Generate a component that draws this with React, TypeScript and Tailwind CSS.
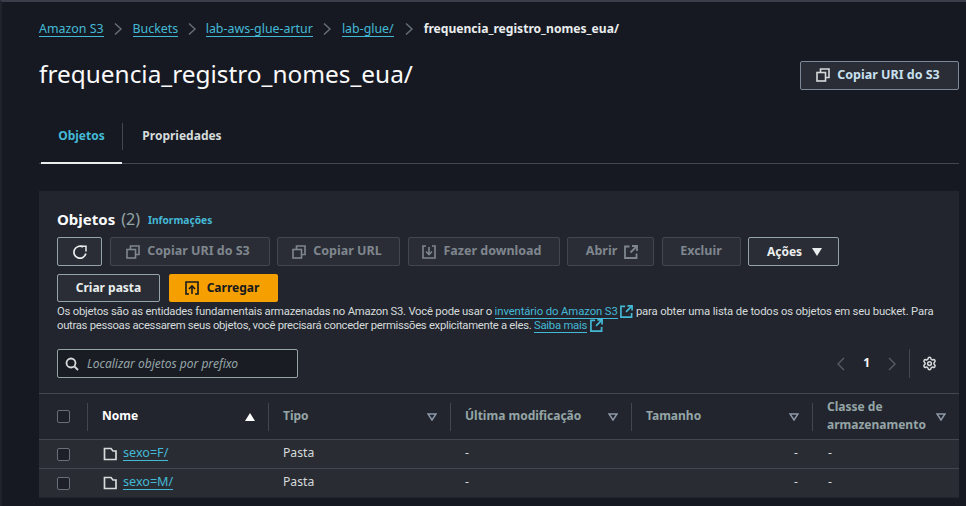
import React from "react";
import { Settings } from "lucide-react";

const ff = "font-['Noto_Sans','Open_Sans',sans-serif]";

function CopyIcon({ c = "currentColor" }: { c?: string }) {
  return (
    <svg width="14" height="14" viewBox="0 0 14 14" fill="none" stroke={c} strokeWidth="1.6" className="shrink-0">
      <rect x="1" y="4.5" width="8.5" height="8.5" />
      <path d="M4.5 4.5V1H13V9.5H9.5" />
    </svg>
  );
}

function ExtIcon({ c = "currentColor", s = 14 }: { c?: string; s?: number }) {
  return (
    <svg width={s} height={s} viewBox="0 0 14 14" fill="none" stroke={c} strokeWidth="1.8" className="inline-block shrink-0 align-[-3px]">
      <path d="M5.5 1.5H1V13H12.5V8.5" />
      <path d="M8 1H13V6" />
      <path d="M13 1L6.5 7.5" />
    </svg>
  );
}

function SortIcon() {
  return (
    <svg width="10" height="8" viewBox="0 0 10 8" fill="none" stroke="#8d99a8" strokeWidth="1.5" className="shrink-0">
      <path d="M1 1H9L5 7Z" />
    </svg>
  );
}

function Checkbox() {
  return <div className="h-[13px] w-[13px] rounded-[2px] border border-[#687078] bg-[#1e2028]" />;
}

function FolderIcon() {
  return (
    <svg width="14" height="14" viewBox="0 0 14 14" fill="none" stroke="#d5dbdb" strokeWidth="1.7" className="shrink-0">
      <path d="M1.5 12.5V1.5H8L10 4H13V12.5Z" />
    </svg>
  );
}

function Crumb({ children }: { children: React.ReactNode }) {
  return <a className="border-b border-[#44b9d6] leading-[15px] text-[#44b9d6]">{children}</a>;
}

function Chevron({ m }: { m: string }) {
  return (
    <svg width="10" height="14" viewBox="0 0 10 14" fill="none" stroke="#687078" strokeWidth="1.4" className={`${m} shrink-0`}>
      <path d="M2 1.5L8 7L2 12.5" />
    </svg>
  );
}

function DisabledBtn({ w, children }: { w: string; children: React.ReactNode }) {
  return (
    <div className={`${w} flex h-[29px] items-center justify-center gap-[7px] rounded-[2px] border border-[#414750] bg-[#2a2d35] pr-[3px] text-[12.5px] font-bold text-[#7f868e]`}>
      {children}
    </div>
  );
}

function Th({ label, active, sep = true }: { label: React.ReactNode; active?: boolean; sep?: boolean }) {
  return (
    <div className="relative flex h-full items-center justify-between pl-[15px] pr-[13px]">
      {sep && <div className="absolute left-0 top-[9px] h-[28px] w-px bg-[#414750]" />}
      <span className={`mb-[2px] text-[12px] font-bold leading-[18px] ${active ? "text-white" : "text-[#95a5a6]"}`}>{label}</span>
      {active ? (
        <svg width="10" height="8" viewBox="0 0 10 8" className="shrink-0"><path d="M0 8H10L5 0Z" fill="#fff" /></svg>
      ) : (
        <SortIcon />
      )}
    </div>
  );
}

function Row({ name }: { name: string }) {
  const cols = "grid grid-cols-[48px_181px_182px_181px_181px_1fr]";
  return (
    <div className={`${cols} h-[29px] items-center border-t border-[#414750] bg-[#2a2c33] text-[12.2px] text-[#d5dbdb]`}>
      <div className="pl-[18px]"><Checkbox /></div>
      <div className="flex items-center gap-[6px] pl-[16px]">
        <FolderIcon />
        <a className="mb-[2px] border-b border-[#44b9d6] text-[12.6px] leading-[15px] text-[#44b9d6]">{name}</a>
      </div>
      <div className="mb-[2px] pl-[15px]">Pasta</div>
      <div className="mb-[2px] pl-[15px]">-</div>
      <div className="mb-[2px] pr-[14px] text-right">-</div>
      <div className="mb-[2px] pl-[16px]">-</div>
    </div>
  );
}

export default function App() {
  return (
    <div className={`${ff} h-[506px] w-[966px] overflow-hidden border-t-2 border-l-2 border-t-[#3a3e4a] border-l-[#20232b] bg-[#161922] text-[12px] text-[#d5dbdb]`}>
      <div className="pl-[37px] pr-[7px]">
        <nav className="mt-[19px] flex h-[16px] items-center text-[12.4px]">
          <Crumb>Amazon S3</Crumb><Chevron m="mx-[9.5px]" />
          <Crumb>Buckets</Crumb><Chevron m="mx-[8.75px]" />
          <Crumb>lab-aws-glue-artur</Crumb><Chevron m="mx-[9.5px]" />
          <Crumb>lab-glue/</Crumb><Chevron m="mx-[10px]" />
          <span className="text-[12.1px] font-bold text-[#eaeded]">frequencia_registro_nomes_eua/</span>
        </nav>

        <div className="mt-[23px] flex h-[30px] items-center justify-between">
          <h1 className="mb-[2px] text-[24.4px] font-normal leading-[30px] text-[#fafafa]">frequencia_registro_nomes_eua/</h1>
          <div className="flex h-[29px] w-[159px] items-center justify-center gap-[7px] rounded-[2px] border border-[#7d8998] bg-[#2a2d35] pr-[3px] text-[12.5px] font-bold text-[#c8e0ee]">
            <CopyIcon c="#d5dbdb" />
            Copiar URI do S3
          </div>
        </div>

        <div className="mt-[31px] flex h-[43px] items-stretch border-b border-[#414750]">
          <div className="relative ml-[2px] flex w-[81px] items-center justify-center text-[12px] font-bold text-[#44b9d6]">
            <span className="mb-[13px]">Objetos</span>
            <div className="absolute -bottom-[1px] left-0 h-[2px] w-full bg-[#eaeded]" />
          </div>
          <div className="mt-[2px] h-[27px] w-px bg-[#414750]" />
          <div className="flex w-[118px] items-center justify-center pb-[13px] text-[12px] font-bold text-[#d5dbdb]">Propriedades</div>
        </div>

        <section className="mt-[27px] h-[307px] w-[920px] bg-[#22252e] pt-[18px]">
          <div className="px-[18px]">
            <div className="flex h-[20px] items-center">
              <span className="text-[15px] font-bold text-[#fafafa]">Objetos</span>
              <span className="ml-[6px] text-[16px] font-normal text-[#95a5a6]">(2)</span>
              <a className="ml-[8px] mt-[3px] text-[10.2px] font-bold text-[#44b9d6]">Informações</a>
            </div>
            <div className="mt-[8px] flex gap-[7.5px]">
              <div className="flex h-[29px] w-[45px] items-center justify-center rounded-[2px] border border-[#95a5a6] bg-[#2a2d35]">
                <svg width="16" height="16" viewBox="0 0 16 16" fill="none" stroke="#eaeded" strokeWidth="1.7">
                  <path d="M13.8 9.5A6 6 0 1 1 11 3" />
                  <path d="M8.5 2.2H14V7.5" strokeWidth="1.5" />
                </svg>
              </div>
              <DisabledBtn w="w-[160px]"><CopyIcon />Copiar URI do S3</DisabledBtn>
              <DisabledBtn w="w-[123px]"><CopyIcon />Copiar URL</DisabledBtn>
              <DisabledBtn w="w-[152px]">
                <svg width="14" height="14" viewBox="0 0 14 14" fill="none" stroke="currentColor" strokeWidth="1.6" className="shrink-0">
                  <path d="M4 1H1V13H13V1H10" /><path d="M7 2V9.5" /><path d="M4 6.5L7 9.5L10 6.5" />
                </svg>
                Fazer download
              </DisabledBtn>
              <div className="flex h-[29px] w-[87px] items-center justify-center gap-[7px] rounded-[2px] border border-[#414750] bg-[#2a2d35] pl-[3px] text-[12.5px] font-bold text-[#7f868e]">Abrir <ExtIcon /></div>
              <div className="flex h-[29px] w-[79px] items-center justify-center rounded-[2px] border border-[#414750] bg-[#2a2d35] text-[12.5px] font-bold text-[#7f868e]">Excluir</div>
              <div className="flex h-[29px] w-[91px] items-center justify-center gap-[10px] rounded-[2px] border border-[#95a5a6] bg-[#2a2d35] pl-[2px] text-[12px] font-bold text-[#eaeded]">
                Ações
                <svg width="10" height="8" viewBox="0 0 10 8"><path d="M0 0H10L5 8Z" fill="#eaeded" /></svg>
              </div>
            </div>
            <div className="mt-[8px] flex gap-[9px]">
              <div className="flex h-[28px] w-[103px] items-center justify-center rounded-[2px] border border-[#95a5a6] bg-[#2a2d35] text-[12px] font-bold text-[#eaeded]">Criar pasta</div>
              <div className="flex h-[28px] w-[109px] items-center justify-center gap-[8px] rounded-[2px] bg-[#f59f00] pr-[3px] text-[12px] font-bold text-[#16191f]">
                <svg width="14" height="14" viewBox="0 0 14 14" fill="none" stroke="#16191f" strokeWidth="1.6" className="shrink-0">
                  <path d="M4 13H1V1H13V13H10" /><path d="M7 13V5" /><path d="M4 8L7 5L10 8" />
                </svg>
                Carregar
              </div>
            </div>
            <p className="mt-[3px] w-[885px] font-['Roboto',sans-serif] text-[11.3px] leading-[14px] tracking-[-0.23px] text-[#d5dbdb]">
              Os objetos são as entidades fundamentais armazenadas no Amazon S3. Você pode usar o{" "}
              <a className="border-b border-[#44b9d6] tracking-[-0.1px] text-[#44b9d6]">inventário do Amazon S3</a>{" "}
              <span className="text-[#44b9d6]"><ExtIcon s={13} /></span>
              <span className="tracking-[-0.16px]"> para obter uma lista de todos os objetos em seu bucket. Para</span>{" "}
              <span className="tracking-[-0.3px]">outras pessoas acessarem seus objetos, você precisará conceder permissões explicitamente a eles.</span>{" "}
              <a className="border-b border-[#44b9d6] text-[#44b9d6]">Saiba mais</a>{" "}
              <span className="text-[#44b9d6]"><ExtIcon s={13} /></span>
            </p>
            <div className="mt-[16px] flex h-[29px] items-center justify-between">
              <div className="flex h-[29px] w-[241px] items-center gap-[8px] rounded-[2px] border border-[#95a5a6] bg-[#1a1c24] pl-[7px]">
                <svg width="14" height="14" viewBox="0 0 14 14" fill="none" stroke="#d5dbdb" strokeWidth="1.8" className="shrink-0">
                  <circle cx="6" cy="6" r="4.5" /><path d="M9.5 9.5L13 13" />
                </svg>
                <span className="text-[12px] italic text-[#95a5a6]">Localizar objetos por prefixo</span>
              </div>
              <div className="flex items-center pr-[4px]">
                <svg width="10" height="14" viewBox="0 0 10 14" fill="none" stroke="#565c64" strokeWidth="1.4"><path d="M8 1L2 7L8 13" /></svg>
                <span className="mx-[17px] mb-[2px] text-[12px] font-bold text-[#fafafa]">1</span>
                <svg width="10" height="14" viewBox="0 0 10 14" fill="none" stroke="#565c64" strokeWidth="1.4"><path d="M2 1L8 7L2 13" /></svg>
                <div className="mx-[12px] h-[29px] w-px bg-[#414750]" />
                <Settings size={15} color="#d5dbdb" strokeWidth={2.4} />
              </div>
            </div>
          </div>

          <div className="mt-[15px] grid h-[46px] grid-cols-[48px_181px_182px_181px_181px_1fr] items-center border-t border-[#414750]">
            <div className="pl-[18px]"><Checkbox /></div>
            <Th label="Nome" active />
            <Th label="Tipo" />
            <Th label="Última modificação" />
            <Th label="Tamanho" />
            <Th label={<>Classe de<br />armazenamento</>} />
          </div>
          <Row name="sexo=F/" />
          <Row name="sexo=M/" />
        </section>
      </div>
    </div>
  );
}
